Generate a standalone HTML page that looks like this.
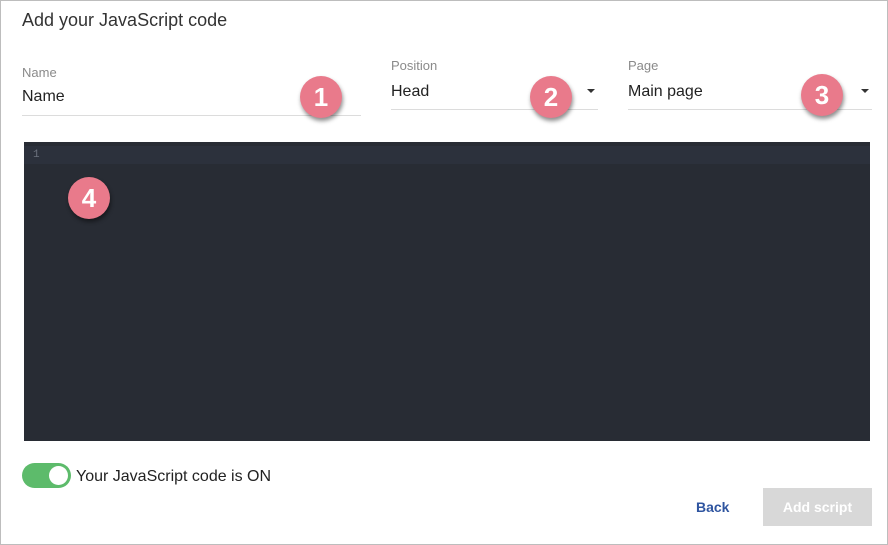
<!DOCTYPE html>
<html><head><style>
body{margin:0;width:888px;height:545px;overflow:hidden;background:#fff;font-family:"Liberation Sans",sans-serif;position:relative}
.frame{position:absolute;left:0;top:0;width:886px;height:543px;border:1px solid #bdbdbd}
.a{position:absolute}
.lbl{font-size:13px;color:#8a8a8a}
.val{font-size:16px;color:#222}
.line{height:1px;background:#dcdcdc}
.badge{position:absolute;width:42px;height:42px;border-radius:50%;background:#e97a8b;color:#fff;font-size:26px;font-weight:bold;text-align:center;line-height:42px;box-shadow:1px 3px 4px rgba(0,0,0,.45)}
.arrow{position:absolute;width:0;height:0;border-left:4px solid transparent;border-right:4px solid transparent;border-top:4px solid #333}
</style></head><body>
<div class="frame"></div>
<div class="a" style="left:22px;top:10px;font-size:18px;color:#333">Add your JavaScript code</div>
<div class="a lbl" style="left:22px;top:65px">Name</div>
<div class="a val" style="left:22px;top:88px">Name</div>
<div class="a line" style="left:22px;top:115px;width:339px"></div>
<div class="a lbl" style="left:391px;top:58px">Position</div>
<div class="a val" style="left:391px;top:83px">Head</div>
<div class="a line" style="left:391px;top:109px;width:207px"></div>
<div class="arrow" style="left:587px;top:89px"></div>
<div class="a lbl" style="left:628px;top:58px">Page</div>
<div class="a val" style="left:628px;top:83px">Main page</div>
<div class="a line" style="left:628px;top:109px;width:244px"></div>
<div class="arrow" style="left:861px;top:89px"></div>
<div class="a" style="left:24px;top:142px;width:846px;height:299px;background:#282c34"></div>
<div class="a" style="left:24px;top:146px;width:846px;height:18px;background:#2c313c"></div>
<div class="a" style="left:33px;top:149px;font-family:'Liberation Mono',monospace;font-size:11px;color:#6b717d">1</div>
<div class="badge" style="left:300px;top:76px">1</div>
<div class="badge" style="left:530px;top:76px">2</div>
<div class="badge" style="left:801px;top:74px">3</div>
<div class="badge" style="left:68px;top:177px">4</div>
<div class="a" style="left:22px;top:463px;width:49px;height:25px;border-radius:13px;background:#5dbb6b"></div>
<div class="a" style="left:49px;top:466px;width:19px;height:19px;border-radius:50%;background:#fff"></div>
<div class="a" style="left:76px;top:468px;font-size:16px;color:#222">Your JavaScript code is ON</div>
<div class="a" style="left:696px;top:499px;font-size:14px;font-weight:bold;color:#2f55a0">Back</div>
<div class="a" style="left:763px;top:488px;width:109px;height:38px;background:#d8d8d8;color:#fff;font-size:14px;font-weight:bold;text-align:center;line-height:38px">Add script</div>
</body></html>
